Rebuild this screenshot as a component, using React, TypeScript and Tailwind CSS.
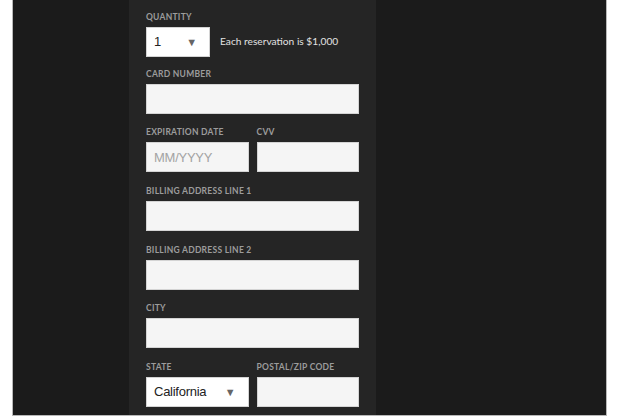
import type { ReactNode } from "react";

// 予約フォームの決済部分。見た目だけ先に合わせる。

const labelCls =
  "block h-[12px] mb-1 text-[8.5px] leading-[12px] font-bold uppercase tracking-[0.03em] text-[#9c9c9c] [font-family:Lato,'Open_Sans',sans-serif]";
const inputCls =
  "block w-full h-[30px] bg-[#f5f5f5] border border-[#d4d4d4] pl-[7px] pr-2 text-[13px] tracking-[-0.02em] text-[#222] outline-none placeholder:text-[#a3a3a3] [font-family:'Liberation_Sans',Arial,sans-serif]";

function Field({ label, children, className = "" }: { label: string; children: ReactNode; className?: string }) {
  return (
    <div className={className}>
      <span className={labelCls}>{label}</span>
      {children}
    </div>
  );
}

function FakeSelect({ value, width }: { value: string; width: string }) {
  return (
    <div
      className={`flex h-[30px] items-center justify-between bg-white border border-[#d4d4d4] pl-[7px] pr-[12px] text-[13px] tracking-[-0.02em] text-[#222] [font-family:'Liberation_Sans',Arial,sans-serif] ${width}`}
    >
      <span>{value}</span>
      <span className="text-[11px] text-[#666]">▼</span>
    </div>
  );
}

export default function App() {
  return (
    <div className="h-[418px] w-[624px] bg-white">
      <div className="ml-[12px] flex h-[416px] w-[595px] border-x border-b border-[#b8b8b8] bg-[#1b1b1b]">
        <div className="ml-[116px] h-full w-[247px] bg-[#252525] px-[17px] pt-[11px]">
          <Field label="Quantity" className="mb-[11px]">
            <div className="flex items-center gap-[10px]">
              <FakeSelect value="1" width="w-[64px]" />
              <span className="text-[10.2px] text-[#e2e2e2] [font-family:Lato,'Open_Sans',sans-serif]">
                Each reservation is $1,000
              </span>
            </div>
          </Field>

          <Field label="Card number" className="mb-3">
            <input className={inputCls} />
          </Field>

          <div className="mb-[13px] grid grid-cols-2 gap-2">
            <Field label="Expiration date">
              <input className={inputCls} placeholder="MM/YYYY" />
            </Field>
            <Field label="CVV">
              <input className={inputCls} />
            </Field>
          </div>

          <Field label="Billing address line 1" className="mb-[13px]">
            <input className={inputCls} />
          </Field>

          <Field label="Billing address line 2" className="mb-3">
            <input className={inputCls} />
          </Field>

          <Field label="City" className="mb-[13px]">
            <input className={inputCls} />
          </Field>

          <div className="grid grid-cols-2 gap-2">
            <Field label="State">
              <FakeSelect value="California" width="w-full" />
            </Field>
            <Field label="Postal/Zip code">
              <input className={inputCls} />
            </Field>
          </div>
        </div>
      </div>
    </div>
  );
}
